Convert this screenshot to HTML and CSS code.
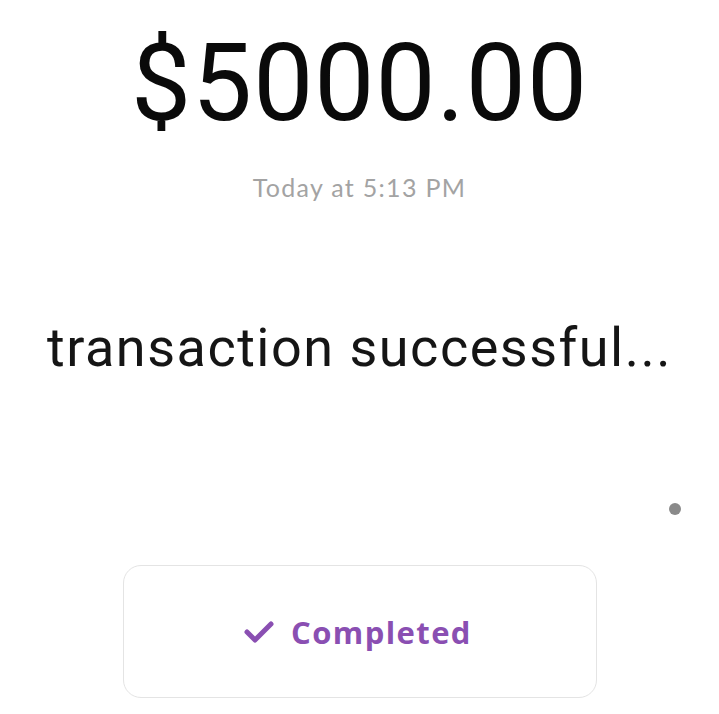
FILE: index.html
```html
<!DOCTYPE html>
<html lang="en">
  <head>
    <meta charset="UTF-8" />
    <meta name="viewport" content="width=device-width, initial-scale=1.0" />
    <title>Payment</title>
    <link rel="stylesheet" href="styles.css">
  </head>
  <body>
    <div class="screen">
      <div class="amount">$5000.00</div>
      <div class="time">Today at 5:13 PM</div>
      <div class="message">transaction successful...</div>
      <div class="dot-row"><span class="dot"></span></div>
      <div class="status">
        <svg class="check" viewBox="0 0 32 24" width="32" height="24">
          <path d="M4 12 L12 20 L28 4" fill="none" stroke="#8a4fb2" stroke-width="5" stroke-linecap="round" stroke-linejoin="round" />
        </svg>
        <span>Completed</span>
      </div>
    </div>
  </body>
</html>
```

FILE: styles.css
```css
body {
  margin: 0;
  background-color: #fff;
  font-family: Roboto, "Liberation Sans", sans-serif;
  color: #111;
}
.screen {
  width: 719px;
  height: 714px;
  display: flex;
  flex-direction: column;
  align-items: center;
  overflow: hidden;
}
.amount {
  margin-top: 22px;
  font-size: 107px;
  line-height: 124px;
  letter-spacing: 1px;
  color: #0a0a0a;
}
.time {
  margin-top: 26px;
  font-family: Lato, "Open Sans", sans-serif;
  font-size: 25px;
  line-height: 30px;
  letter-spacing: 1.3px;
  color: #a3a3a3;
}
.message {
  margin-top: 115px;
  font-size: 54px;
  line-height: 62px;
  letter-spacing: 1.5px;
  color: #151515;
}
.dot-row {
  width: 100%;
  display: flex;
  justify-content: flex-end;
  margin-top: 124px;
}
.dot {
  width: 12px;
  height: 12px;
  border-radius: 50%;
  background-color: #8a8a8a;
  margin-right: 38px;
}
.status {
  margin-top: 50px;
  width: 472px;
  height: 131px;
  border: 1px solid #e4e4e4;
  border-radius: 18px;
  display: flex;
  align-items: center;
  justify-content: center;
  gap: 16px;
  font-family: "Open Sans", sans-serif;
  font-weight: 700;
  font-size: 31px;
  letter-spacing: 1.4px;
  color: #8a4fb2;
}
.check {
  margin-left: -4px;
}
```
